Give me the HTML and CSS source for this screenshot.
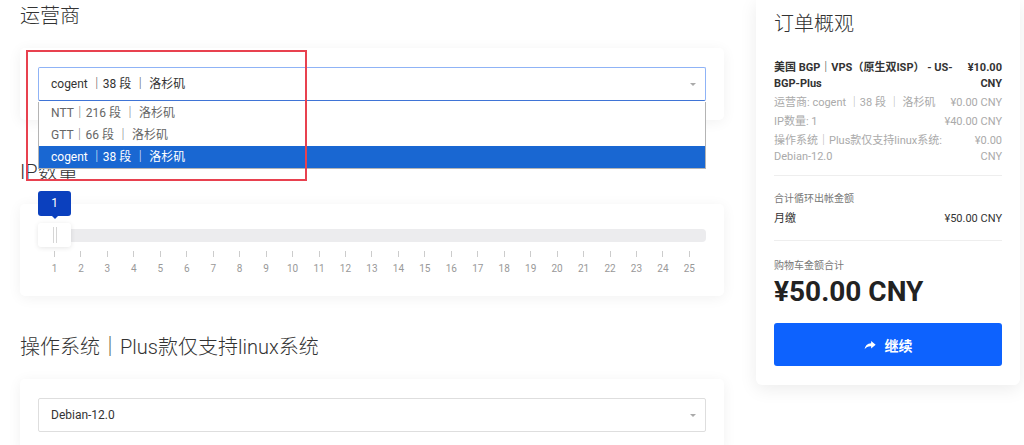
FILE: index.html
```html
<!DOCTYPE html>
<html>
<head lang="zh">
    <meta charset="UTF-8">
    <title>订单配置</title>
    <link rel="stylesheet" href="styles.css">
</head>
<body>
<div class="page">
    <div class="main">
        <h3 class="title">运营商</h3>
        <div class="card">
            <div class="select focus">
                <span>cogent ｜38 段 ｜ 洛杉矶</span>
                <i class="caret"></i>
                <ul class="options">
                    <li class="opt">NTT｜216 段 ｜ 洛杉矶</li>
                    <li class="opt">GTT｜66 段 ｜ 洛杉矶</li>
                    <li class="opt active">cogent ｜38 段 ｜ 洛杉矶</li>
                </ul>
            </div>
        </div>

        <h3 class="title title_gap">IP数量</h3>
        <div class="card card_slider">
            <div class="slider">
                <div class="track"></div>
                <div class="handle"><i></i><i></i></div>
                <div class="tip">1</div>
            </div>
            <div class="scale">
                <span>1</span><span>2</span><span>3</span><span>4</span><span>5</span>
                <span>6</span><span>7</span><span>8</span><span>9</span><span>10</span>
                <span>11</span><span>12</span><span>13</span><span>14</span><span>15</span>
                <span>16</span><span>17</span><span>18</span><span>19</span><span>20</span>
                <span>21</span><span>22</span><span>23</span><span>24</span><span>25</span>
            </div>
        </div>

        <h3 class="title title_gap2">操作系统｜Plus款仅支持linux系统</h3>
        <div class="card">
            <div class="select">
                <span>Debian-12.0</span>
                <i class="caret"></i>
            </div>
        </div>

        <!-- 标注框 -->
        <div class="mark"></div>
    </div>

    <div class="side">
        <div class="summary">
            <h3 class="sum_title">订单概观</h3>
            <div class="row strong">
                <span class="row_name">美国 BGP｜VPS（原生双ISP） - US-BGP-Plus</span>
                <span class="row_price narrow">¥10.00 CNY</span>
            </div>
            <div class="row muted">
                <span class="row_name">运营商: cogent ｜38 段 ｜ 洛杉矶</span>
                <span class="row_price">¥0.00 CNY</span>
            </div>
            <div class="row muted">
                <span class="row_name">IP数量: 1</span>
                <span class="row_price">¥40.00 CNY</span>
            </div>
            <div class="row muted">
                <span class="row_name">操作系统｜Plus款仅支持linux系统: Debian-12.0</span>
                <span class="row_price narrow">¥0.00 CNY</span>
            </div>

            <div class="block">
                <div class="label">合计循环出帐金额</div>
                <div class="row">
                    <span class="row_name">月缴</span>
                    <span class="row_price">¥50.00 CNY</span>
                </div>
            </div>

            <div class="label label_total">购物车金额合计</div>
            <div class="total">¥50.00 CNY</div>
            <a class="btn" href="#">
                <svg class="btn_icon" viewBox="0 0 16 16" width="12" height="12">
                    <path d="M9.5 2.5 L15.5 7.5 L9.5 12.5 V9.6 C5.6 9.4 3 10.6 0.8 13.6 C1.4 8.8 4.4 6 9.5 5.5 Z" fill="#fff"/>
                </svg>
                继续
            </a>
        </div>
    </div>
</div>
</body>
</html>
```

FILE: styles.css
```css
* {
    margin: 0;
    padding: 0;
    box-sizing: border-box;
}

body {
    background: #fff;
    font-family: Roboto, "Noto Sans CJK SC", sans-serif;
    color: #333;
}

.page {
    display: flex;
    gap: 32px;
    width: 1024px;
    height: 445px;
    overflow: hidden;
}

.main {
    position: relative;
    width: 724px;
    flex: none;
    padding: 4px 0 0 20px;
}

.title {
    font-size: 20px;
    line-height: 24px;
    font-weight: 300;
    color: #333;
    margin-bottom: 20px;
}

.title_gap {
    margin-top: 40px;
}

.title_gap2 {
    margin-top: 39px;
}

.card {
    background: #fff;
    border-radius: 5px;
    padding: 19px 18px;
    box-shadow: 0 2px 14px rgba(0, 0, 0, .06);
}

/* 下拉框 */
.select {
    position: relative;
    height: 34px;
    border: 1px solid #dedede;
    border-radius: 2px;
    padding-left: 12px;
    font-size: 12px;
    line-height: 32px;
    color: #333;
}

.select.focus {
    border-color: #8fb3f6;
    border-bottom-color: #3f74d6;
}

.caret {
    position: absolute;
    right: 9px;
    top: 15px;
    border-left: 3px solid transparent;
    border-right: 3px solid transparent;
    border-top: 3px solid #aaa;
}

.options {
    position: absolute;
    left: -1px;
    right: -1px;
    top: 34px;
    list-style: none;
    background: #fff;
    border: 1px solid #b4b4b4;
    border-top: none;
    z-index: 2;
}

.opt {
    height: 22px;
    line-height: 23px;
    padding-left: 12px;
    color: #666;
}

.opt.active {
    background: #1967d2;
    color: #fff;
}

/* 标注框 */
.mark {
    position: absolute;
    left: 26px;
    top: 50px;
    width: 281px;
    height: 131px;
    border: 2px solid #e8414f;
    z-index: 3;
}

/* 滑块 */
.card_slider {
    padding-bottom: 21px;
}

.slider {
    position: relative;
    height: 24px;
}

.track {
    position: relative;
    top: 6px;
    height: 13px;
    border-radius: 4px;
    background: #ececee;
}

.handle {
    position: absolute;
    left: 0;
    top: 0;
    width: 33px;
    height: 24px;
    background: #fff;
    border-radius: 3px;
    box-shadow: 0 1px 5px rgba(0, 0, 0, .1);
    display: flex;
    justify-content: center;
    align-items: center;
    gap: 2px;
}

.handle i {
    width: 1px;
    height: 16px;
    background: #d6d6d6;
}

.tip {
    position: absolute;
    left: 0;
    top: -32px;
    width: 33px;
    height: 25px;
    background: #0b40be;
    border-radius: 3px;
    color: #fff;
    font-size: 12px;
    line-height: 25px;
    text-align: center;
}

.tip:after {
    content: "";
    position: absolute;
    left: 14px;
    bottom: -3px;
    border-left: 3px solid transparent;
    border-right: 3px solid transparent;
    border-top: 3px solid #0b40be;
}

.scale {
    display: flex;
    justify-content: space-between;
    margin: 4px 6px 0 6px;
}

.scale span {
    width: 21px;
    text-align: center;
    font-size: 10px;
    line-height: 12px;
    color: #999;
    padding-top: 12px;
    position: relative;
}

.scale span:before {
    content: "";
    position: absolute;
    left: 10px;
    top: 0;
    width: 1px;
    height: 6px;
    background: #ccc;
}

/* 订单概观 */
.side {
    width: 264px;
    flex: none;
}

.summary {
    background: #fff;
    border-radius: 0 0 6px 6px;
    padding: 10px 18px 19px;
    box-shadow: 0 4px 18px rgba(0, 0, 0, .08);
}

.sum_title {
    font-size: 20px;
    line-height: 28px;
    font-weight: 300;
    color: #333;
    margin-bottom: 22px;
}

.row {
    display: flex;
    justify-content: space-between;
    gap: 8px;
    font-size: 11px;
    line-height: 16px;
    color: #333;
    margin-bottom: 3px;
}

.row.strong {
    font-weight: 700;
}

.row.muted {
    color: #aaa;
}

.row_price {
    flex: none;
    text-align: right;
}

.row_price.narrow {
    width: 36px;
}

.block {
    margin-top: 10px;
    padding: 15px 0 10px;
    border-top: 1px solid #eee;
    border-bottom: 1px solid #eee;
}

.label {
    font-size: 10px;
    line-height: 16px;
    color: #777;
    margin-bottom: 4px;
}

.label_total {
    margin-top: 17px;
    margin-bottom: 1px;
}

.total {
    font-size: 28px;
    line-height: 34px;
    font-weight: 700;
    color: #222;
}

.btn {
    display: flex;
    justify-content: center;
    align-items: center;
    gap: 9px;
    margin-top: 14px;
    height: 43px;
    border-radius: 3px;
    background: #0d62fe;
    color: #fff;
    font-size: 14px;
    font-weight: 700;
    text-decoration: none;
}
```
